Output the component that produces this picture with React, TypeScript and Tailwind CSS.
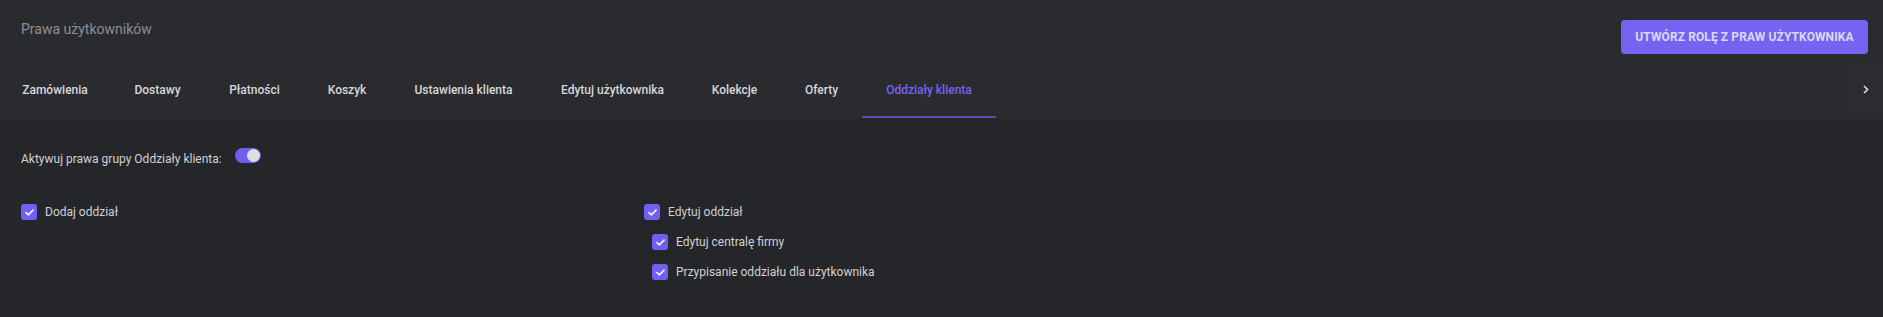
const tabs = [
  { label: 'Zamówienia', w: 'w-[110px]' },
  { label: 'Dostawy', w: 'w-[95px]' },
  { label: 'Płatności', w: 'w-[99px]' },
  { label: 'Koszyk', w: 'w-[86px]' },
  { label: 'Ustawienia klienta', w: 'w-[147px]' },
  { label: 'Edytuj użytkownika', w: 'w-[151px]' },
  { label: 'Kolekcje', w: 'w-[93px]' },
  { label: 'Oferty', w: 'w-[81px]' },
  { label: 'Oddziały klienta', w: 'w-[134px]', active: true },
];

function Check({ label, sub }: { label: string; sub?: boolean }) {
  return (
    <div className={`flex items-center h-[16px] ${sub ? 'ml-[8px]' : ''}`}>
      <span className="w-[16px] h-[16px] rounded-[3px] bg-[#7160ef] flex items-center justify-center">
        <svg width="9" height="7" viewBox="0 0 9 7" fill="none">
          <path
            d="M1 3.6 L3.4 5.8 L8 1.2"
            stroke="#ececf4"
            strokeWidth="1.8"
            strokeLinecap="round"
            strokeLinejoin="round"
          />
        </svg>
      </span>
      <span className="ml-[8px] text-[12px] leading-[16px] text-[#d0d1d4]">{label}</span>
    </div>
  );
}

export default function App() {
  return (
    <div className="w-[1883px] h-[317px] bg-[#252629] font-['Roboto',sans-serif]">
      <div className="h-[119px] bg-[#2a2b2f] flex flex-col">
        <div className="h-[62px] flex justify-between items-start pl-[21px] pr-[15px]">
          <h1 className="mt-[19px] text-[14px] leading-[20px] text-[#8d8e93]">Prawa użytkowników</h1>
          <button
            type="button"
            className="mt-[20px] h-[34px] w-[247px] rounded-[4px] bg-[#7464f1] text-[12px] font-bold tracking-[0.1px] text-[#dcd8f9]"
          >
            UTWÓRZ ROLĘ Z PRAW UŻYTKOWNIKA
          </button>
        </div>
        <div className="flex h-[57px]">
          {tabs.map((t) => (
            <div
              key={t.label}
              className={`${t.w} flex items-center justify-center text-[12px] font-medium relative ${
                t.active ? 'text-[#7663f0]' : 'text-[#d7d7d9]'
              }`}
            >
              <span className="-mt-[2px]">{t.label}</span>
              {t.active && <span className="absolute left-0 right-0 bottom-[1px] h-[2px] bg-[#5b4abb]" />}
            </div>
          ))}
          <div className="flex-1" />
          <div className="w-[38px] flex items-center justify-center bg-[#2b2c30]">
            <svg width="6" height="9" viewBox="0 0 6 9" fill="none" className="-mt-[3px] ml-[4px]">
              <path d="M1 1 L4.6 4.5 L1 8" stroke="#dedee0" strokeWidth="1.6" />
            </svg>
          </div>
        </div>
      </div>

      <div className="pl-[21px] pt-[29px]">
        <div className="flex items-start h-[16px]">
          <span className="text-[12px] leading-[16px] mt-[3px] text-[#d0d1d4]">
            Aktywuj prawa grupy Oddziały klienta:
          </span>
          <span className="ml-[13px] w-[26px] h-[15px] rounded-full bg-[#6f5ef0] flex items-center justify-end pr-[1px]">
            <span className="w-[13px] h-[13px] rounded-full bg-[#dfdfe2]" />
          </span>
        </div>

        <div className="flex mt-[40px]">
          <div className="w-[623px]">
            <Check label="Dodaj oddział" />
          </div>
          <div className="flex flex-col gap-[14px]">
            <Check label="Edytuj oddział" />
            <Check label="Edytuj centralę firmy" sub />
            <Check label="Przypisanie oddziału dla użytkownika" sub />
          </div>
        </div>
      </div>
    </div>
  );
}
